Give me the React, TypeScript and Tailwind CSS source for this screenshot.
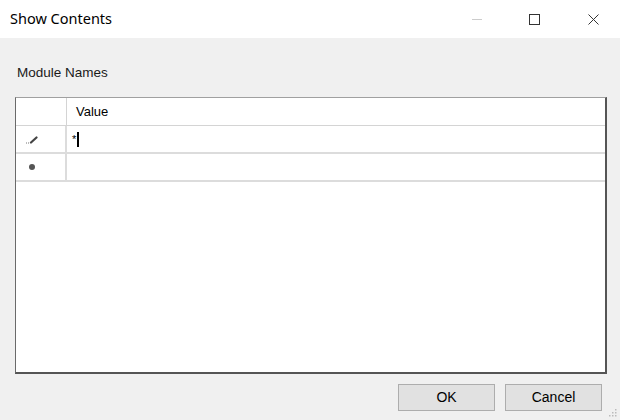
export default function App() {
  return (
    <div className="flex h-[420px] w-[620px] flex-col overflow-hidden bg-[#f0f0f0] font-['Liberation_Sans',Arial,sans-serif] text-black">
      {/* title bar */}
      <div className="flex h-[38px] shrink-0 items-center bg-white">
        <span className="pl-[10px] font-['Noto_Sans',sans-serif] text-[14.5px] text-black">Show Contents</span>
        <div className="ml-auto flex h-full pr-[4px]">
          <div className="flex w-[46px] items-center justify-center">
            <div className="h-px w-[10px] bg-[#cccccc]" />
          </div>
          <div className="ml-[11px] flex w-[46px] items-center justify-center">
            <div className="h-[11px] w-[11px] border border-[#333]" />
          </div>
          <div className="ml-[13px] flex w-[46px] items-center justify-center">
            <svg width="11" height="11" viewBox="0 0 11 11">
              <path d="M0.5 0.5 L10.5 10.5 M10.5 0.5 L0.5 10.5" stroke="#333" strokeWidth="1" />
            </svg>
          </div>
        </div>
      </div>

      {/* body */}
      <div className="flex flex-1 flex-col px-[15px]">
        <div className="pt-[27px] pl-[2px] text-[13.5px] leading-[16px] text-[#1a1a1a]">Module Names</div>

        <div className="mt-[16px] flex h-[277px] w-[592px] flex-col border-t border-l border-t-[#a0a0a0] border-l-[#6a6a6a] border-r-2 border-b-2 border-r-[#555] border-b-[#555] bg-white">
          {/* header */}
          <div className="flex h-[28px] border-b border-[#d4d4d4]">
            <div className="w-[51px] border-r border-[#d4d4d4]" />
            <div className="flex flex-1 items-center pl-[9px] text-[13px]">Value</div>
          </div>
          {/* row 1 */}
          <div className="flex h-[28px] border-b-2 border-[#dcdcdc]">
            <div className="flex w-[51px] items-center border-r-2 border-[#dcdcdc] pl-[9px]">
              <svg width="14" height="8" viewBox="0 0 14 8" className="mt-[2px]">
                <path d="M1 7 L2 7 M3 7 L4 7" stroke="#777" strokeWidth="1" />
                <path d="M6 6.5 L11.5 1.5" stroke="#444" strokeWidth="2.2" strokeLinecap="round" />
              </svg>
            </div>
            <div className="flex flex-1 items-center pl-[5px] text-[13px]">
              <span className="text-[11px] leading-none">*</span>
              <span className="ml-[1px] h-[15px] w-[2px] bg-black" />
            </div>
          </div>
          {/* row 2 */}
          <div className="flex h-[28px] border-b-2 border-[#dcdcdc]">
            <div className="flex w-[51px] items-center border-r-2 border-[#dcdcdc] pl-[13px]">
              <div className="h-[6px] w-[6px] rounded-full bg-[#555]" />
            </div>
            <div className="flex-1" />
          </div>
        </div>

        <div className="mt-[10px] flex justify-end gap-[10px] pr-[3px]">
          <button className="flex h-[27px] w-[97px] items-center justify-center border border-[#adadad] bg-[#e1e1e1] text-[14px]">OK</button>
          <button className="flex h-[27px] w-[97px] items-center justify-center border border-[#adadad] bg-[#e1e1e1] text-[14px]">Cancel</button>
        </div>
      </div>
      <div className="relative">
        <svg width="10" height="10" viewBox="0 0 10 10" className="absolute right-[2px] bottom-[2px]">
          <rect x="7" y="1" width="1.5" height="1.5" fill="#bbb" />
          <rect x="4" y="4" width="1.5" height="1.5" fill="#bbb" />
          <rect x="7" y="4" width="1.5" height="1.5" fill="#bbb" />
          <rect x="1" y="7" width="1.5" height="1.5" fill="#bbb" />
          <rect x="4" y="7" width="1.5" height="1.5" fill="#bbb" />
          <rect x="7" y="7" width="1.5" height="1.5" fill="#bbb" />
        </svg>
      </div>
    </div>
  )
}
